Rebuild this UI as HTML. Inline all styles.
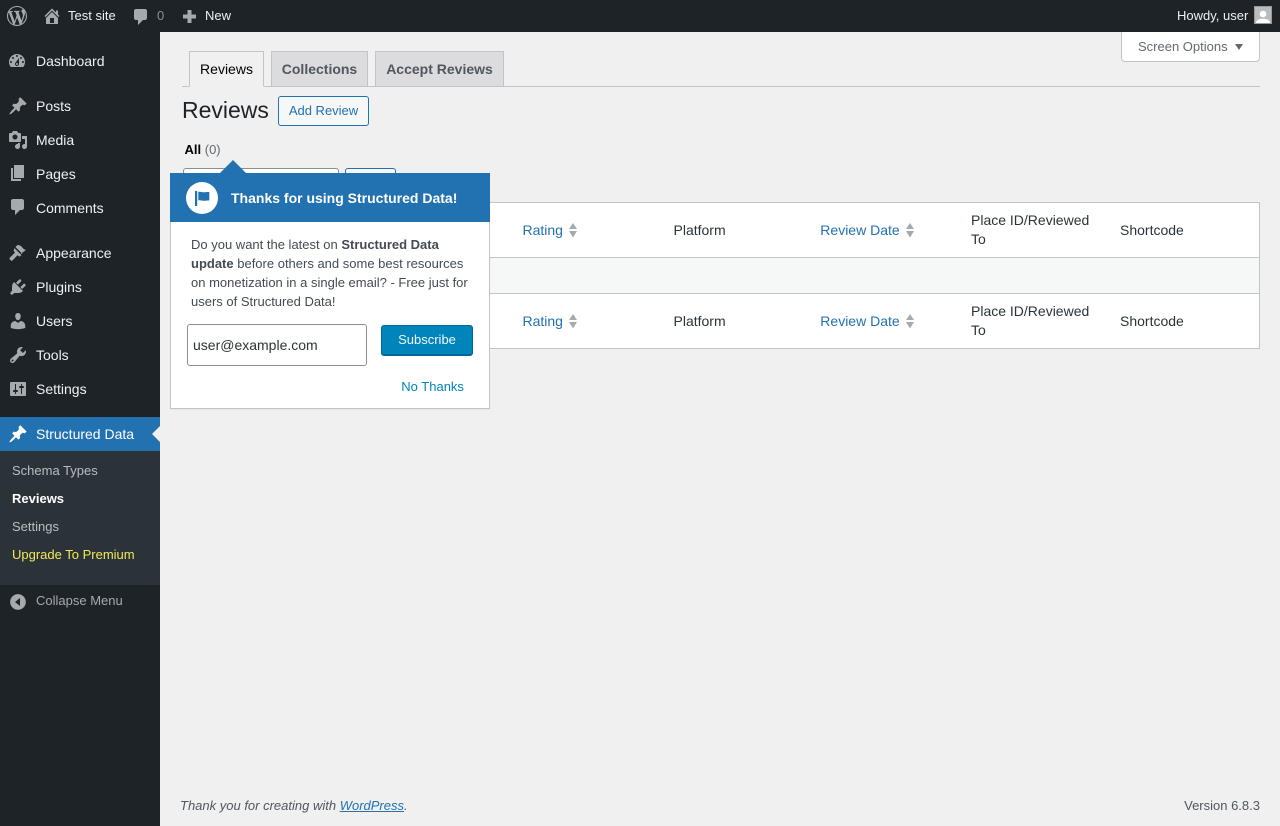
<!DOCTYPE html>
<html lang="en"><head><meta charset="utf-8"><title>Reviews</title>
<style>
*{box-sizing:border-box}
html,body{margin:0;padding:0}
body{width:1280px;height:826px;overflow:hidden;position:relative;background:#f0f0f1;font-family:"Liberation Sans",sans-serif;font-size:13px;color:#3c434a}
.a{position:absolute;white-space:nowrap}
svg{position:absolute;display:block}
#bar{position:absolute;left:0;top:0;width:1280px;height:32px;background:#1d2327}
#bar .a{color:#f0f0f1;font-size:13px;line-height:32px;top:0}
#side{position:absolute;left:0;top:32px;width:160px;height:794px;background:#1d2327}
.m{position:absolute;left:36px;color:#f0f0f1;font-size:14px;line-height:20px;white-space:nowrap}
.i{fill:#a7aaad}
.s{position:absolute;left:12px;font-size:13px;line-height:18px;color:rgba(240,246,252,.7);white-space:nowrap}
.tab{position:absolute;top:51px;height:36px;border:1px solid #c3c4c7;background:#dcdcde;color:#50575e;font-size:14px;font-weight:700;line-height:35px;text-align:center}
.th{position:absolute;font-size:14px;line-height:19px;color:#2c3338;white-space:nowrap}
.l{color:#2271b1}
</style></head><body>

<div id="side"></div>
<div class="a" style="left:0;top:417px;width:160px;height:34px;background:#2271b1"></div>
<div class="a" style="left:0;top:451px;width:160px;height:134px;background:#2c3338"></div>
<div class="a" style="left:152px;top:426px;width:0;height:0;border:8px solid transparent;border-left:0;border-right-color:#f0f0f1"></div>

<svg class="i" style="left:7px;top:51px" width="20" height="20" viewBox="0 0 20 20"><path fill-rule="evenodd" d="M3.76 16h12.48c1.100-1.370 1.760-3.110 1.760-5 0-4.420-3.580-8-8-8s-8 3.580-8 8c0 1.890.660 3.630 1.760 5zM10 4c.550 0 1 .450 1 1s-.450 1-1 1-1-.450-1-1 .450-1 1-1zM6 6c.550 0 1 .450 1 1s-.450 1-1 1-1-.450-1-1 .450-1 1-1zm8 0c.550 0 1 .450 1 1s-.450 1-1 1-1-.450-1-1 .450-1 1-1zm-5.370 5.550L12 7v6c0 1.100-.900 2-2 2s-2-.900-2-2c0-.570.240-1.080.630-1.450zM4 10c.550 0 1 .450 1 1s-.450 1-1 1-1-.450-1-1 .450-1 1-1zm12 0c.550 0 1 .450 1 1s-.450 1-1 1-1-.450-1-1 .450-1 1-1zm-5 3c0-.550-.450-1-1-1s-1 .450-1 1 .450 1 1 1 1-.450 1-1z"/></svg>
<div class="m" style="top:51px">Dashboard</div>

<svg class="i" style="left:8px;top:96px" width="20" height="20" viewBox="0 0 20 20"><path d="M10.440 3.020l1.820-1.820 6.360 6.350-1.830 1.820c-1.050-.680-2.480-.570-3.410.360l-.750.750c-.920.930-1.040 2.350-.350 3.410l-1.830 1.820-2.410-2.410-2.800 2.790c-.420.420-3.380 2.710-3.800 2.290s1.860-3.390 2.280-3.810l2.790-2.790L4.100 9.360l1.830-1.820c1.050.690 2.480.570 3.410-.360l.750-.750c.930-.920 1.040-2.350.350-3.410z"/></svg>
<div class="m" style="top:96px">Posts</div>

<svg class="i" style="left:8px;top:130px" width="20" height="20" viewBox="0 0 20 20"><path fill-rule="evenodd" d="M13 11V4c0-.550-.450-1-1-1h-1.670L9 1H5L3.670 3H2c-.550 0-1 .450-1 1v7c0 .550.450 1 1 1h10c.550 0 1-.450 1-1zM7 4.500c1.380 0 2.500 1.120 2.500 2.500S8.380 9.500 7 9.500 4.500 8.380 4.500 7 5.620 4.500 7 4.500zM14 6h5v10.500c0 1.380-1.120 2.500-2.500 2.500S14 17.880 14 16.500s1.120-2.500 2.500-2.500c.170 0 .340.020.500.050V9h-3V6zm-4 8.050V13h2v3.500c0 1.380-1.120 2.500-2.500 2.500S7 17.880 7 16.500 8.120 14 9.500 14c.170 0 .340.020.500.050z"/></svg>
<div class="m" style="top:130px">Media</div>

<svg class="i" style="left:8px;top:163px" width="20" height="20" viewBox="0 0 20 20"><path d="M6 15V2h10v13H6zm-1 1h8v2H3V5h2v11z"/></svg>
<div class="m" style="top:164px">Pages</div>

<svg class="i" style="left:8px;top:197px" width="20" height="20" viewBox="0 0 20 20"><path d="M5 2h9c1.100 0 2 .900 2 2v7c0 1.100-.900 2-2 2h-2l-5 5v-5H5c-1.100 0-2-.900-2-2V4c0-1.100.900-2 2-2z"/></svg>
<div class="m" style="top:198px">Comments</div>

<svg class="i" style="left:8px;top:243px" width="20" height="20" viewBox="0 0 20 20"><path d="M14.480 11.060L7.410 3.990l1.500-1.500c.500-.560 2.300-.470 3.510.320 1.210.800 1.430 1.280 2.660 2.510 1.230 1.220 2.220 1.370 2.220 1.370.480.060.480.370.170.680l-4.990 3.690zM6.350 5.050l7.070 7.070-1.060 1.060c-.440.440-1.190.440-1.630 0l-1.060-1.060-4.950 5.130c-.600.600-1.580.600-2.180 0l-.590-.590c-.600-.600-.600-1.580 0-2.180l5.130-4.950-1.060-1.060c-.440-.440-.440-1.190 0-1.630z"/></svg>
<div class="m" style="top:243px">Appearance</div>

<svg class="i" style="left:8px;top:277px" width="20" height="20" viewBox="0 0 20 20"><path d="M13.110 4.360L9.870 7.600 8 5.730l3.240-3.240c.350-.340 1.050-.200 1.560.320.520.510.660 1.210.310 1.550zm-8 1.770l.910-1.120 9.010 9.010-1.190.840c-.710.710-2.630 1.160-3.820 1.160H6.140L4.900 17.260c-.590.590-1.540.590-2.120 0-.590-.580-.590-1.530 0-2.120l1.240-1.240v-3.880c0-1.130.380-3.140 1.090-3.890zm7.260 3.970l3.240-3.240c.340-.350 1.040-.210 1.550.310.520.510.660 1.210.310 1.550l-3.240 3.250z"/></svg>
<div class="m" style="top:277px">Plugins</div>

<svg class="i" style="left:8px;top:311px" width="20" height="20" viewBox="0 0 20 20"><path d="M10 9.250c-2.270 0-2.730-3.440-2.730-3.440C7 4.020 7.820 2 9.970 2c2.160 0 2.980 2.020 2.710 3.810 0 0-.410 3.440-2.680 3.440zm0 2.570L12.720 10c2.390 0 4.520 2.330 4.520 4.530v2.490s-3.650 1.130-7.240 1.130c-3.650 0-7.240-1.130-7.240-1.130v-2.490c0-2.250 1.940-4.480 4.470-4.480z"/></svg>
<div class="m" style="top:311px">Users</div>

<svg class="i" style="left:8px;top:345px" width="20" height="20" viewBox="0 0 20 20"><path fill-rule="evenodd" d="M16.680 9.770c-1.340 1.340-3.300 1.670-4.950.990l-5.410 6.520c-.990.990-2.590.990-3.570 0-.990-.980-.990-2.580 0-3.570l6.520-5.420c-.680-1.650-.350-3.610.990-4.950 1.280-1.280 3.120-1.620 4.720-1.060l-2.890 2.890 2.820 2.820 2.860-2.870c.530 1.580.180 3.390-1.090 4.650zM3.810 16.210c.400.390 1.040.390 1.430 0 .400-.400.400-1.040 0-1.430-.390-.400-1.030-.400-1.430 0-.390.390-.390 1.030 0 1.430z"/></svg>
<div class="m" style="top:345px">Tools</div>

<svg class="i" style="left:8px;top:379px" width="20" height="20" viewBox="0 0 20 20"><path fill-rule="evenodd" d="M18 16V4c0-.550-.450-1-1-1H3c-.550 0-1 .450-1 1v12c0 .550.450 1 1 1h14c.550 0 1-.450 1-1zM8 11h1c.550 0 1 .450 1 1s-.450 1-1 1H8v1.500c0 .280-.220.500-.500.500s-.500-.220-.500-.500V13H6c-.550 0-1-.450-1-1s.450-1 1-1h1V5.500c0-.280.220-.500.500-.500s.500.220.500.500V11zm5-2h-1c-.550 0-1-.450-1-1s.450-1 1-1h1V5.500c0-.280.220-.500.500-.500s.500.220.500.500V7h1c.550 0 1 .450 1 1s-.450 1-1 1h-1v5.500c0 .280-.220.500-.500.500s-.500-.220-.500-.500V9z"/></svg>
<div class="m" style="top:379px">Settings</div>

<svg style="left:8px;top:424px;fill:#fff" width="20" height="20" viewBox="0 0 20 20"><path d="M10.440 3.020l1.820-1.820 6.360 6.350-1.830 1.820c-1.050-.680-2.480-.570-3.410.360l-.750.750c-.920.930-1.040 2.350-.350 3.410l-1.830 1.820-2.410-2.410-2.800 2.790c-.420.420-3.380 2.710-3.800 2.290s1.860-3.390 2.280-3.810l2.790-2.790L4.100 9.360l1.830-1.820c1.050.690 2.480.570 3.410-.360l.750-.750c.930-.920 1.040-2.350.350-3.410z"/></svg>
<div class="m" style="top:424px;color:#fff">Structured Data</div>

<div class="s" style="top:462px">Schema Types</div>
<div class="s" style="top:490px;color:#fff;font-weight:700">Reviews</div>
<div class="s" style="top:518px">Settings</div>
<div class="s" style="top:546px;color:#f1e95a">Upgrade To Premium</div>

<svg class="i" style="left:8px;top:592px" width="20" height="20" viewBox="0 0 20 20"><path fill-rule="evenodd" d="M10 2.160c4.330 0 7.840 3.510 7.840 7.840s-3.510 7.840-7.840 7.840S2.160 14.330 2.160 10 5.670 2.160 10 2.160zM12 14V6l-5 4z"/></svg>
<div class="a" style="left:36px;top:592px;font-size:13px;line-height:18px;color:#a7aaad">Collapse Menu</div>

<div id="bar">
<svg style="left:7px;top:6px" width="20" height="20" viewBox="0 0 20 20" fill="#a7aaad"><path fill-rule="evenodd" d="M20 10c0-5.510-4.490-10-10-10C4.480 0 0 4.490 0 10c0 5.520 4.480 10 10 10 5.510 0 10-4.480 10-10zM7.780 15.370L4.370 6.220c.550-.020 1.170-.080 1.170-.080.500-.060.440-1.130-.060-1.110 0 0-1.450.110-2.370.110-.180 0-.370 0-.580-.010C4.120 2.690 6.890 1 10 1c2.330 0 4.450.870 6.050 2.340-.680-.110-1.650.390-1.650 1.580 0 .740.450 1.360.900 2.100.350.610.550 1.360.550 2.460 0 1.490-1.400 5-1.400 5l-3.030-8.370c.540-.020.820-.170.820-.170.500-.050.440-1.250-.060-1.220 0 0-1.440.120-2.380.120-.870 0-2.330-.120-2.330-.120-.500-.030-.560 1.200-.060 1.220l.920.080 1.260 3.410zM17.410 10c.240-.640.740-1.870.430-4.250.700 1.290 1.050 2.710 1.050 4.250 0 3.290-1.730 6.240-4.400 7.780.970-2.590 1.940-5.200 2.920-7.780zM6.100 18.090C3.120 16.650 1.110 13.530 1.110 10c0-1.300.230-2.480.720-3.590C3.250 10.300 4.670 14.200 6.100 18.090zm4.030-6.630l2.580 6.980c-.860.290-1.740.450-2.710.450-.820 0-1.620-.110-2.360-.330.840-2.360 1.680-4.730 2.490-7.100z"/></svg>
<svg style="left:42px;top:6px" width="20" height="20" viewBox="0 0 20 20" fill="#a7aaad"><path fill-rule="evenodd" d="M16 8.500l1.530 1.530-1.060 1.060L10 4.620l-6.470 6.470-1.060-1.060L10 2.500l4 4v-2h2v4zm-6-2.460l6 5.990V18H4v-5.970zM12 17v-5H8v5h4z"/></svg>
<div class="a" style="left:68px">Test site</div>
<svg style="left:131px;top:7px" width="20" height="20" viewBox="0 0 20 20" fill="#a7aaad"><path d="M5 2h9c1.100 0 2 .900 2 2v7c0 1.100-.900 2-2 2h-2l-5 5v-5H5c-1.100 0-2-.900-2-2V4c0-1.100.900-2 2-2z"/></svg>
<div class="a" style="left:157px;color:#8c8f94">0</div>
<svg style="left:179px;top:6px" width="20" height="20" viewBox="0 0 20 20" fill="#a7aaad"><path d="M8.500 4h4v4.500H17v4h-4.500V17h-4v-4.500H4v-4h4.500z"/></svg>
<div class="a" style="left:205px">New</div>
<div class="a" style="left:1177px">Howdy, user</div>
<div class="a" style="left:1254px;top:6px;width:18px;height:18px;background:#bbb;border:1px solid #999;overflow:hidden"><svg style="left:0;top:0" width="16" height="16" viewBox="0 0 16 16" fill="#fff"><circle cx="8" cy="7" r="3.300"/><path d="M1 16c0-3 3-4.300 7-4.300s7 1.300 7 4.300z"/></svg></div>
</div>

<div class="a" style="left:1121px;top:32px;width:139px;height:30px;background:#fff;border:1px solid #c3c4c7;border-top:0;border-radius:0 0 4px 4px"></div>
<div class="a" style="left:1138px;top:38px;line-height:18px;color:#646970">Screen Options</div>
<div class="a" style="left:1235px;top:44px;width:0;height:0;border:4px solid transparent;border-top:6px solid #646970;border-bottom:0"></div>

<div class="a" style="left:182px;top:86px;width:1078px;height:1px;background:#c3c4c7"></div>
<div class="tab" style="left:189px;width:75px;background:#f0f0f1;border-bottom-color:#f0f0f1;color:#000;font-weight:400">Reviews</div>
<div class="tab" style="left:271px;width:97px">Collections</div>
<div class="tab" style="left:375px;width:129px">Accept Reviews</div>

<div class="a" style="left:182px;top:95px;font-size:23px;line-height:30px;color:#1d2327">Reviews</div>
<div class="a" style="left:278px;top:96px;width:91px;height:30px;border:1px solid #2271b1;border-radius:3px;background:#f6f7f7;color:#2271b1;font-size:13px;line-height:28px;text-align:center">Add Review</div>

<div class="a" style="left:184.500px;top:141px;line-height:18px;color:#646970"><b style="color:#000">All</b> (0)</div>

<div class="a" style="left:183px;top:168px;width:156px;height:20px;background:#fff;border:1px solid #8c8f94;border-radius:3px"></div>
<div class="a" style="left:345px;top:168px;width:51px;height:20px;background:#f6f7f7;border:1px solid #2271b1;border-radius:3px"></div>

<div class="a" style="left:182px;top:202px;width:1078px;height:147px;background:#fff;border:1px solid #c3c4c7"></div>
<div class="a" style="left:183px;top:257px;width:1076px;height:37px;background:#f6f7f7;border-top:1px solid #c3c4c7;border-bottom:1px solid #c3c4c7"></div>

<div class="th l" style="left:522.500px;top:220.500px">Rating</div>
<svg style="left:567px;top:222px" width="12" height="17" viewBox="0 0 12 17" fill="#a7aaad"><path d="M2 7l4-6 4 6zM2 9h8l-4 6.500z"/></svg>
<div class="th" style="left:673.500px;top:220.500px">Platform</div>
<div class="th l" style="left:820.300px;top:220.500px">Review Date</div>
<svg style="left:904px;top:222px" width="12" height="17" viewBox="0 0 12 17" fill="#a7aaad"><path d="M2 7l4-6 4 6zM2 9h8l-4 6.500z"/></svg>
<div class="th" style="left:971px;top:211px">Place ID/Reviewed<br>To</div>
<div class="th" style="left:1120px;top:220.500px">Shortcode</div>

<div class="th l" style="left:522.500px;top:311.500px">Rating</div>
<svg style="left:567px;top:313px" width="12" height="17" viewBox="0 0 12 17" fill="#a7aaad"><path d="M2 7l4-6 4 6zM2 9h8l-4 6.500z"/></svg>
<div class="th" style="left:673.500px;top:311.500px">Platform</div>
<div class="th l" style="left:820.300px;top:311.500px">Review Date</div>
<svg style="left:904px;top:313px" width="12" height="17" viewBox="0 0 12 17" fill="#a7aaad"><path d="M2 7l4-6 4 6zM2 9h8l-4 6.500z"/></svg>
<div class="th" style="left:971px;top:302px">Place ID/Reviewed<br>To</div>
<div class="th" style="left:1120px;top:311.500px">Shortcode</div>

<div class="a" style="left:170px;top:173px;width:320px;height:236px;background:#fff;border:1px solid #c3c4c7;box-shadow:0 1px 1px rgba(0,0,0,.04)"></div>
<div class="a" style="left:170px;top:173px;width:320px;height:49px;background:#2271b1"></div>
<div class="a" style="left:220px;top:160px;width:0;height:0;border-left:13px solid transparent;border-right:13px solid transparent;border-bottom:13px solid #2271b1"></div>
<div class="a" style="left:186px;top:182px;width:32px;height:32px;border-radius:50%;background:#fff"></div>
<svg style="left:192px;top:188px" width="20" height="20" viewBox="0 0 20 20" fill="#2271b1"><rect x="3" y="3" width="2.200" height="15"/><path d="M6.300 4c2-.700 3.500.300 5.500.300 1.500 0 3-.300 5.500-.300v8.500c-2.500 0-4 .300-5.500.300-2 0-3.500-1-5.500-.300z"/></svg>
<div class="a" style="left:231px;top:189px;font-size:14px;line-height:18px;font-weight:700;color:#fff">Thanks for using Structured Data!</div>
<div class="a" style="left:191px;top:235px;font-size:13px;line-height:19px;color:#444b54">Do you want the latest on <b>Structured Data</b><br><b>update</b> before others and some best resources<br>on monetization in a single email? - Free just for<br>users of Structured Data!</div>
<div class="a" style="left:187px;top:324px;width:180px;height:42px;background:#fff;border:1px solid #8c8f94;border-radius:3px;padding-left:5px;font-size:14px;line-height:40px;color:#2c3338">user@example.com</div>
<div class="a" style="left:381px;top:325px;width:92px;height:31px;background:#0085ba;border:1px solid #006799;border-bottom-width:2px;border-radius:3px;color:#f0f6fc;font-size:13px;line-height:27px;text-align:center">Subscribe</div>
<div class="a" style="left:401.300px;top:378px;font-size:13px;line-height:18px;color:#0085ba">No Thanks</div>

<div class="a" style="left:180px;top:797px;font-size:13px;line-height:18px;font-style:italic;color:#50575e">Thank you for creating with <span class="l" style="text-decoration:underline">WordPress</span>.</div>
<div class="a" style="right:20px;top:797px;font-size:13px;line-height:18px;color:#50575e">Version 6.8.3</div>
</body></html>
